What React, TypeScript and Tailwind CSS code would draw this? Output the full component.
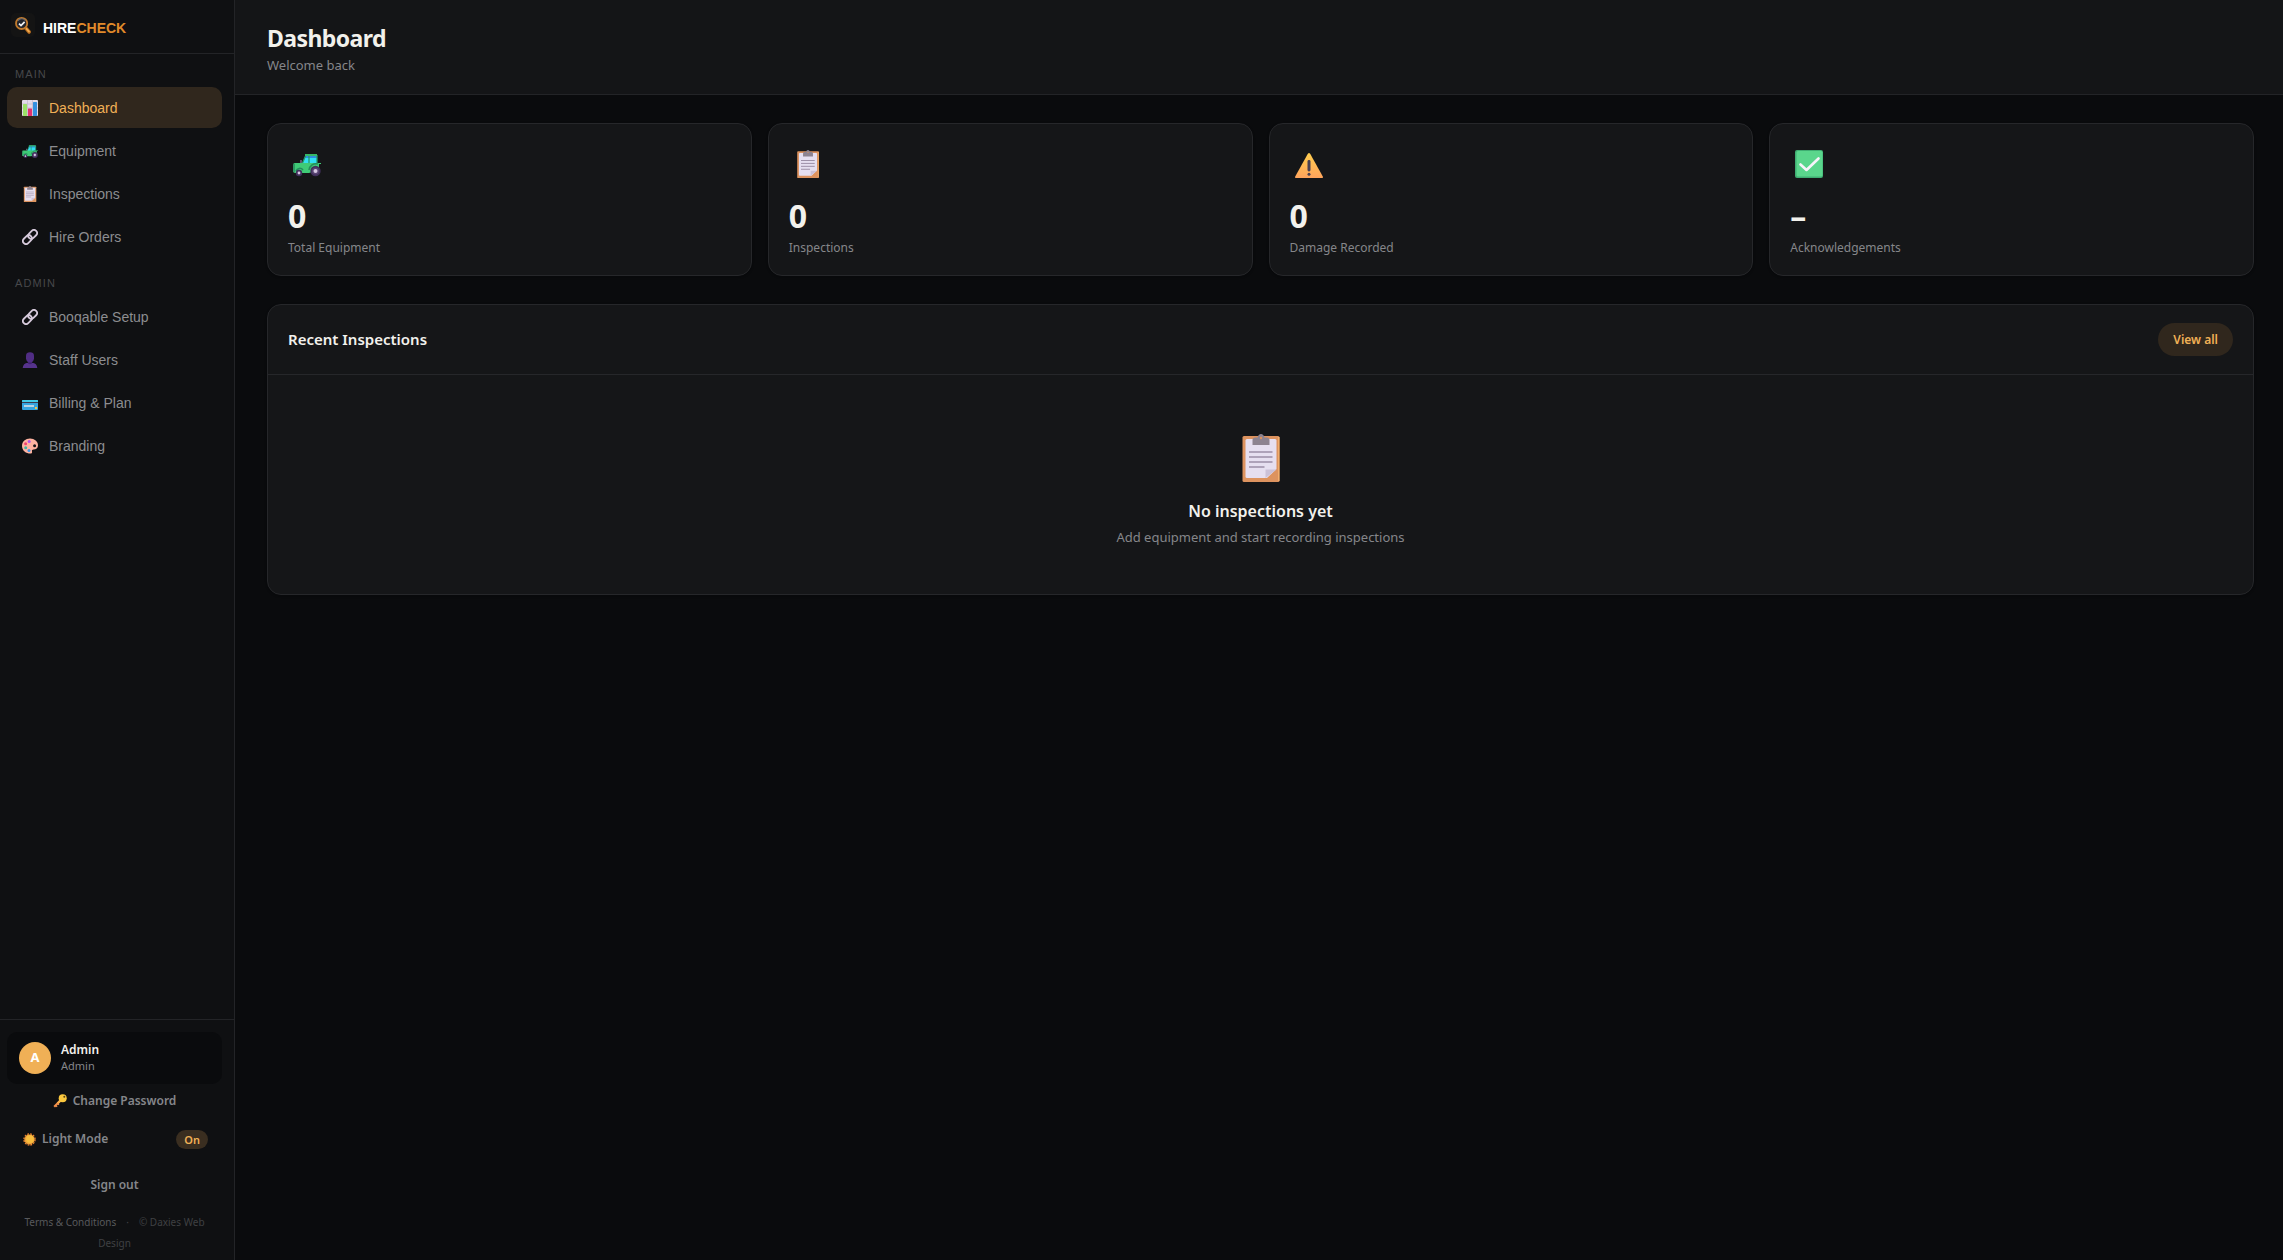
import React from 'react';

type IconProps = { className?: string };

const LogoMark: React.FC<IconProps> = ({ className }) => (
  <svg viewBox="0 0 24 24" className={className} aria-hidden="true">
    <rect width="24" height="24" rx="5" fill="#141414" />
    <path d="M14.6 14.8l3.6 4.2" stroke="#b36a1e" strokeWidth="3.6" strokeLinecap="round" />
    <path d="M15.6 15.8l2.4 2.8" stroke="#f0a94e" strokeWidth="1.8" strokeLinecap="round" />
    <circle cx="10.6" cy="10.4" r="5.6" fill="#20242c" stroke="#c27a2c" strokeWidth="1.8" />
    <path d="M7 7.600a4.600 4.600 0 0 1 7.200-.2" fill="none" stroke="#666c78" strokeWidth="1.200" />
    <path d="M8 10.600l2 2 3.600-3.800" fill="none" stroke="#f3f3f3" strokeWidth="1.700" />
  </svg>
);

const ChartIcon: React.FC<IconProps> = ({ className }) => (
  <svg viewBox="0 0 32 32" className={className} aria-hidden="true">
    <rect width="32" height="32" rx="2" fill="#e3dbe9" />
    <path d="M0 8h32M0 16h32M0 24h32M11 0v32M21 0v32" stroke="#c4b9cc" strokeWidth="1.5" />
    <rect x="2" y="8" width="8" height="24" rx="1" fill="#9be167" />
    <rect x="12" y="17" width="8" height="15" rx="1" fill="#e2316f" />
    <rect x="22" y="4" width="8" height="28" rx="1" fill="#3490e0" />
  </svg>
);

const TractorIcon: React.FC<IconProps> = ({ className }) => (
  <svg viewBox="0 0 28 28" className={className} aria-hidden="true">
    <path d="M13 5h11v9H9z" fill="#31dff2" />
    <path d="M13 5h11v3H11.500z" fill="#2f8ee0" />
    <path d="M13 5L9 14M16 5v9M24 5v9" stroke="#259a68" strokeWidth="1.3" />
    <path d="M12 4h12v2H12z" fill="#35b867" />
    <path d="M0 15q0-2 2-2h26v1h-2v6l-10 3H2l-2-1z" fill="#3fca76" />
    <path d="M0 15h2M0 17h2M0 19h2M0 21h2" stroke="#1c6650" strokeWidth="1" />
    <path d="M16 20a7 7 0 0 1 9-6M3 21a4 4 0 0 1 7-1" fill="none" stroke="#238c5d" strokeWidth="1.5" />
    <path d="M8 13V10" stroke="#7c6a87" strokeWidth="1.5" />
    <circle cx="22.500" cy="21" r="5.200" fill="#41305c" />
    <circle cx="22.500" cy="21" r="3.500" fill="#594473" />
    <circle cx="22.500" cy="21" r="2" fill="#d5c7e2" />
    <circle cx="6" cy="23" r="3.200" fill="#41305c" />
    <circle cx="6" cy="23" r="1.400" fill="#d5c7e2" />
  </svg>
);

const ClipboardIcon: React.FC<IconProps> = ({ className }) => (
  <svg viewBox="0 0 48 48" className={className} aria-hidden="true">
    <rect x="5.5" y="2" width="37" height="46" rx="1.5" fill="#dd935f" />
    <path d="M41 3h1.5v44H41z" fill="#f2ad6c" />
    <path d="M10 5h28a1.5 1.5 0 0 1 1.5 1.5V35l-9.500 9H10a1.5 1.5 0 0 1-1.5-1.5v-36A1.5 1.5 0 0 1 10 5z" fill="#e6dff0" />
    <path d="M28.5 44v-8.5h11z" fill="#cbc1d8" />
    <path d="M12 18h23.500M12 23h23.500M12 28h23.500M12 33h15.500" stroke="#9c8fa6" strokeWidth="1.7" />
    <path d="M15.500 11V6q0-2.500 3-2.500h2Q21.500 0 24 0t3.500 3.500h2q3 0 3 2.500v5z" fill="#8d8390" />
    <circle cx="24" cy="4" r="1.2" fill="#dd935f" />
  </svg>
);

const LinkIcon: React.FC<IconProps> = ({ className }) => (
  <svg viewBox="0 0 16 16" className={className} aria-hidden="true">
    <g fill="none" stroke="#d6cadb" strokeWidth="1.8">
      <rect x="-5" y="-3.1" width="10" height="6.2" rx="3.1" transform="translate(5.4 10.600) rotate(-45)" />
      <rect x="-5" y="-3.1" width="10" height="6.2" rx="3.1" transform="translate(10.600 5.400) rotate(-45)" />
    </g>
  </svg>
);

const PersonIcon: React.FC<IconProps> = ({ className }) => (
  <svg viewBox="0 0 16 16" className={className} aria-hidden="true">
    <path d="M.7 16q.3-4.600 5.300-5.200V9.500h4v1.300q5 .6 5.300 5.200z" fill="#56338c" />
    <path d="M6 9v2.500q2 1.500 4 0V9z" fill="#402070" />
    <path d="M4 3.500Q4.200.3 8 .3t4 3.200v3Q11.500 10.500 8 10.500T4 6.500z" fill="#502d84" />
  </svg>
);

const CardIcon: React.FC<IconProps> = ({ className }) => (
  <svg viewBox="0 0 16 16" className={className} aria-hidden="true">
    <rect y="5" width="16" height="10" rx="1" fill="#36a5e0" />
    <path d="M1 5h14a1 1 0 0 1 1 1v1H0V6a1 1 0 0 1 1-1z" fill="#43cbe6" />
    <path d="M0 7h16v1H0z" fill="#3a3b50" />
    <path d="M2 10h10v2H2z" fill="#b9d3e4" />
    <path d="M13 12h2v2h-2z" fill="#f1c94a" />
  </svg>
);

const PaletteIcon: React.FC<IconProps> = ({ className }) => (
  <svg viewBox="0 0 16 16" className={className} aria-hidden="true">
    <path d="M8 .6c4.500 0 8 3 8 6.600 0 3-2 4.300-4.400 4.300-1.400 0-1.900.8-1.600 1.900.3 1.300-.3 2.200-1.500 2.200C4 15.600 0 12.500 0 8S3.600.6 8 .6z" fill="#ffb3a1" />
    <circle cx="12.6" cy="7.7" r="1.5" fill="#171519" />
    <circle cx="7.2" cy="3.5" r="1.5" fill="#b350ee" />
    <circle cx="3.6" cy="5.8" r="1.5" fill="#ef4272" />
    <circle cx="3.7" cy="9.8" r="1.5" fill="#3fb5a6" />
    <circle cx="7" cy="12.5" r="1.5" fill="#3c96ec" />
  </svg>
);

const KeyIcon: React.FC<IconProps> = ({ className }) => (
  <svg viewBox="0 0 14 14" className={className} aria-hidden="true">
    <path d="M7.500 6.500L1.200 12.800" stroke="#f28f4a" strokeWidth="2.2" />
    <path d="M8 6L4.500 9.500" stroke="#f7ae4a" strokeWidth="2.2" />
    <path d="M2.500 11.500l1.700 1.200M4.500 9.500l1.500 1.300" stroke="#f28f4a" strokeWidth="1.2" />
    <circle cx="9.700" cy="4.300" r="4" fill="#fbc83e" />
    <circle cx="11.300" cy="2.800" r="1" fill="#574116" />
  </svg>
);

const SunIcon: React.FC<IconProps> = ({ className }) => (
  <svg viewBox="0 0 14 14" className={className} aria-hidden="true">
    <circle cx="7" cy="7" r="6" fill="none" stroke="#f08432" strokeWidth="1.4" strokeDasharray="1.9 1.24" />
    <circle cx="7" cy="7" r="5.5" fill="#f0a238" />
    <circle cx="7.5" cy="6.5" r="4.2" fill="#f8be3e" />
  </svg>
);

const WarningIcon: React.FC<IconProps> = ({ className }) => (
  <svg viewBox="0 0 28 28" className={className} aria-hidden="true">
    <defs>
      <linearGradient id="warning-fill" x1="0" y1="0" x2="0" y2="1">
        <stop offset="0" stopColor="#ffce4f" />
        <stop offset="1" stopColor="#ffa45c" />
      </linearGradient>
    </defs>
    <path d="M12.700 4q1.300-2 2.600 0l12.500 22.500q.5 1.500-1 1.500H1.200q-1.500 0-1-1.500z" fill="url(#warning-fill)" />
    <rect x="12.500" y="10" width="3" height="11.500" rx="1.400" fill="#4a4152" />
    <circle cx="14" cy="24.300" r="1.500" fill="#4a4152" />
  </svg>
);

const CheckIcon: React.FC<IconProps> = ({ className }) => (
  <svg viewBox="0 0 28 28" className={className} aria-hidden="true">
    <rect width="28" height="28" rx="2" fill="#3fae72" />
    <rect x="1.5" y="1" width="26" height="25.500" rx="1.500" fill="#5ad68c" />
    <path d="M5.500 14.500l6 5.500L23.500 8.500" fill="none" stroke="#f7f3fa" strokeWidth="2.6" strokeLinecap="round" strokeLinejoin="round" />
  </svg>
);

type NavItem = { label: string; icon: React.FC<IconProps>; active?: boolean };

const mainNav: NavItem[] = [
  { label: 'Dashboard', icon: ChartIcon, active: true },
  { label: 'Equipment', icon: TractorIcon },
  { label: 'Inspections', icon: ClipboardIcon },
  { label: 'Hire Orders', icon: LinkIcon },
];

const adminNav: NavItem[] = [
  { label: 'Booqable Setup', icon: LinkIcon },
  { label: 'Staff Users', icon: PersonIcon },
  { label: 'Billing & Plan', icon: CardIcon },
  { label: 'Branding', icon: PaletteIcon },
];

const stats = [
  { label: 'Total Equipment', value: '0', icon: TractorIcon },
  { label: 'Inspections', value: '0', icon: ClipboardIcon },
  { label: 'Damage Recorded', value: '0', icon: WarningIcon },
  { label: 'Acknowledgements', value: '–', icon: CheckIcon },
];

const NavGroup: React.FC<{ title: string; items: NavItem[] }> = ({ title, items }) => (
  <section className="pb-[6px]">
    <h2 className="pt-3 pb-1 pl-2 text-[11px] leading-[17px] font-medium tracking-widest text-[#47484b]">
      {title}
    </h2>
    <ul className="flex flex-col gap-[2px]">
      {items.map(({ label, icon: Icon, active }) => (
        <li key={label}>
          <a
            href="#"
            className={`flex h-[41px] items-center gap-[11px] rounded-[10px] px-[15px] text-sm ${
              active ? 'bg-[#30271d] text-[#f0b056]' : 'text-[#8c8d90]'
            }`}
          >
            <Icon className="size-4 shrink-0" />
            {label}
          </a>
        </li>
      ))}
    </ul>
  </section>
);

const Sidebar: React.FC = () => (
  <aside className="sticky top-0 flex h-screen w-[235px] shrink-0 flex-col border-r border-[#232427] bg-[#0f1012]">
    <div className="flex h-[54px] shrink-0 items-center gap-2 border-b border-[#232427] pl-[11px]">
      <LogoMark className="mb-1 size-6" />
      <span className="pt-[2px] font-['Liberation_Sans',Arial,sans-serif] text-sm font-bold text-white">
        HIRE<span className="text-[#e08a2a]">CHECK</span>
      </span>
    </div>

    <nav className="flex-1 overflow-hidden pr-3 pl-[7px] font-['Liberation_Sans',Arial,sans-serif]">
      <NavGroup title="MAIN" items={mainNav} />
      <NavGroup title="ADMIN" items={adminNav} />
    </nav>

    <div className="flex flex-col border-t border-[#232427] pt-3 pr-3 pb-[6px] pl-[7px]">
      <div className="flex h-[52px] items-center gap-[10px] rounded-[10px] bg-[#0a0b0d] px-3">
        <div className="flex size-8 items-center justify-center rounded-full bg-[#f0b056] text-[13px] font-bold text-white">
          A
        </div>
        <div>
          <p className="text-xs leading-4 font-semibold text-[#f2f1ec]">Admin</p>
          <p className="text-[11px] leading-4 text-[#85868a]">Admin</p>
        </div>
      </div>
      <button type="button" className="flex h-[34px] items-center justify-center gap-[6px] text-xs font-semibold text-[#85868a]">
        <KeyIcon className="size-[14px]" />
        Change Password
      </button>
      <button type="button" className="mt-1 flex h-[34px] items-center gap-[6px] pr-[14px] pl-4 text-xs font-semibold text-[#85868a]">
        <SunIcon className="size-[13px]" />
        Light Mode
        <span className="ml-auto rounded-full bg-[#3a2e20] px-2 text-[11px] leading-[19px] text-[#f0b056]">On</span>
      </button>
      <button type="button" className="mt-3 h-[34px] text-xs font-semibold text-[#85868a]">
        Sign out
      </button>
      <p className="mt-[10px] px-[10px] text-center text-[10px] leading-[21px] text-[#3f4043]">
        <a href="#" className="text-[#58595c]">
          Terms &amp; Conditions
        </a>
        <span className="mx-[10px]">·</span>
        <span>© Daxies Web</span> <span>Design</span>
      </p>
    </div>
  </aside>
);

const App: React.FC = () => {
  return (
    <div className="flex min-h-screen bg-[#0a0b0d] font-['Noto_Sans','Open_Sans',sans-serif] text-[#f2f1ec]">
      <Sidebar />

      <div className="min-w-0 flex-1">
        <header className="h-[95px] border-b border-[#232427] bg-[#141517] px-8 pt-[22px]">
          <h1 className="text-[23px] leading-8 font-bold tracking-tight">Dashboard</h1>
          <p className="text-[13px] leading-[22px] text-[#85868a]">Welcome back</p>
        </header>

        <main className="pt-7 pr-[29px] pb-8 pl-8">
          <div className="mb-7 grid grid-cols-4 gap-4">
            {stats.map(({ label, value, icon: Icon }) => (
              <div key={label} className="rounded-[14px] border border-[#26272a] bg-[#151618] px-5 pt-5 pb-[18px] shadow-sm">
                <div className="mb-4 flex h-10 w-[38px] items-center justify-center">
                  <Icon className="size-7" />
                </div>
                <p className="text-[32px] leading-8 font-bold">{value}</p>
                <p className="mt-[6px] text-xs leading-[19px] text-[#85868a]">{label}</p>
              </div>
            ))}
          </div>

          <section className="rounded-[14px] border border-[#26272a] bg-[#151618] shadow-sm">
            <div className="flex h-[70px] items-center justify-between border-b border-[#26272a] px-5">
              <h2 className="text-[15px] font-semibold">Recent Inspections</h2>
              <button type="button" className="h-[33px] rounded-full bg-[#30271d] px-[15px] text-xs font-semibold text-[#f0b056]">
                View all
              </button>
            </div>
            <div className="flex flex-col items-center pt-[59px] pb-[46px] text-center">
              <ClipboardIcon className="mb-4 size-12" />
              <h3 className="text-base leading-[26px] font-semibold">No inspections yet</h3>
              <p className="mt-[3px] text-[13px] leading-[21px] text-[#85868a]">
                Add equipment and start recording inspections
              </p>
            </div>
          </section>
        </main>
      </div>
    </div>
  );
};

export default App;
